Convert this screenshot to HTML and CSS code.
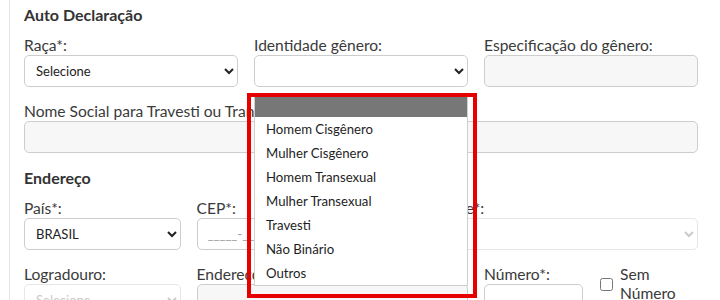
FILE: index.html
```html
<!DOCTYPE html>
<html lang="pt-BR">

<head>
    <meta charset="UTF-8">
    <meta name="viewport" content="width=device-width, initial-scale=1.0">
    <title>Cadastro</title>
    <link rel="stylesheet" href="styles.css">
</head>

<body>
    <div class="card">
        <h2 class="section-title first">Auto Declaração</h2>
        <div class="row">
            <div class="field col-4">
                <label>Raça*:</label>
                <select class="control">
                    <option>Selecione</option>
                </select>
            </div>
            <div class="field col-4">
                <label>Identidade gênero:</label>
                <div class="select-wrap">
                    <select class="control">
                        <option></option>
                    </select>
                    <!-- lista aberta do select -->
                    <ul class="menu">
                        <li class="active"></li>
                        <li>Homem Cisgênero</li>
                        <li>Mulher Cisgênero</li>
                        <li>Homem Transexual</li>
                        <li>Mulher Transexual</li>
                        <li>Travesti</li>
                        <li>Não Binário</li>
                        <li>Outros</li>
                    </ul>
                    <div class="highlight"></div>
                </div>
            </div>
            <div class="field col-4">
                <label>Especificação do gênero:</label>
                <input class="control muted" type="text" disabled>
            </div>
        </div>

        <div class="row">
            <div class="field col-12">
                <label>Nome Social para Travesti ou Transexual:</label>
                <input class="control muted" type="text" disabled>
            </div>
        </div>

        <h2 class="section-title">Endereço</h2>
        <div class="row">
            <div class="field col-3">
                <label>País*:</label>
                <select class="control">
                    <option>BRASIL</option>
                </select>
            </div>
            <div class="field col-4">
                <label>CEP*:</label>
                <input class="control" type="text" placeholder="_____-___">
            </div>
            <div class="field col-5">
                <label>Cidade*:</label>
                <select class="control" disabled>
                    <option></option>
                </select>
            </div>
        </div>

        <div class="row">
            <div class="field col-3">
                <label>Logradouro:</label>
                <select class="control" disabled>
                    <option>Selecione</option>
                </select>
            </div>
            <div class="field col-5">
                <label>Endereço:</label>
                <input class="control muted" type="text" disabled>
            </div>
            <div class="field col-2">
                <label>Número*:</label>
                <input class="control" type="text">
            </div>
            <div class="check col-2">
                <input type="checkbox" id="sem-numero">
                <label for="sem-numero">Sem Número</label>
            </div>
        </div>
    </div>
</body>

</html>
```

FILE: styles.css
```css
* {
    box-sizing: border-box;
    margin: 0;
    padding: 0;
}

body {
    font-family: 'Lato', 'Liberation Sans', sans-serif;
    background: #fff;
    color: #333;
    overflow: hidden;
}

.card {
    margin-left: 9px;
    border-left: 1px solid #e6e6e6;
    padding: 5px 22px 0 14px;
    min-height: 300px;
}

.section-title {
    font-size: 16px;
    line-height: 20px;
    font-weight: 700;
    color: #333;
    margin: 15px 0 10px;
}

.section-title.first {
    margin-top: 0;
}

.row {
    display: grid;
    grid-template-columns: repeat(12, 1fr);
    column-gap: 16px;
    margin-bottom: 14px;
}

.col-2 { grid-column: span 2; }
.col-3 { grid-column: span 3; }
.col-4 { grid-column: span 4; }
.col-5 { grid-column: span 5; }
.col-12 { grid-column: span 12; }

.field label {
    display: block;
    font-size: 15.6px;
    line-height: 20px;
    color: #3a3a3a;
    white-space: nowrap;
}

.control {
    display: block;
    width: 100%;
    height: 32px;
    border: 1px solid #cdcdcd;
    border-radius: 5px;
    background-color: #fff;
    font-family: inherit;
    font-size: 13px;
    color: #222;
    padding: 0 7px;
}

input.control {
    padding: 0 10px;
}

.control.muted {
    background-color: #f7f7f7;
}

.control::placeholder {
    color: #a0a0a0;
}

select.control:disabled {
    background-color: #fff;
    color: #b5b5b5;
    border-color: #dcdcdc;
}

.select-wrap {
    position: relative;
}

.menu {
    position: absolute;
    top: 40px;
    left: 0;
    width: 100%;
    list-style: none;
    background: #fff;
    border: 1px solid #cfcfcf;
    z-index: 5;
}

.menu li {
    height: 24px;
    line-height: 24px;
    padding-left: 11px;
    font-size: 13.2px;
    color: #1e1e1e;
}

.menu li.active {
    height: 21px;
    background: #777;
}

.highlight {
    position: absolute;
    top: 38px;
    left: -7px;
    width: 230px;
    height: 205px;
    border: 4px solid #e60000;
    z-index: 6;
}

.check {
    display: flex;
    align-items: center;
    align-self: start;
    padding-top: 1px;
}

.check input {
    width: 13px;
    height: 13px;
    margin: 0 7px 0 1px;
    flex-shrink: 0;
}

.check label {
    font-size: 15.6px;
    line-height: 19px;
    color: #3a3a3a;
    width: 72px;
}
```
